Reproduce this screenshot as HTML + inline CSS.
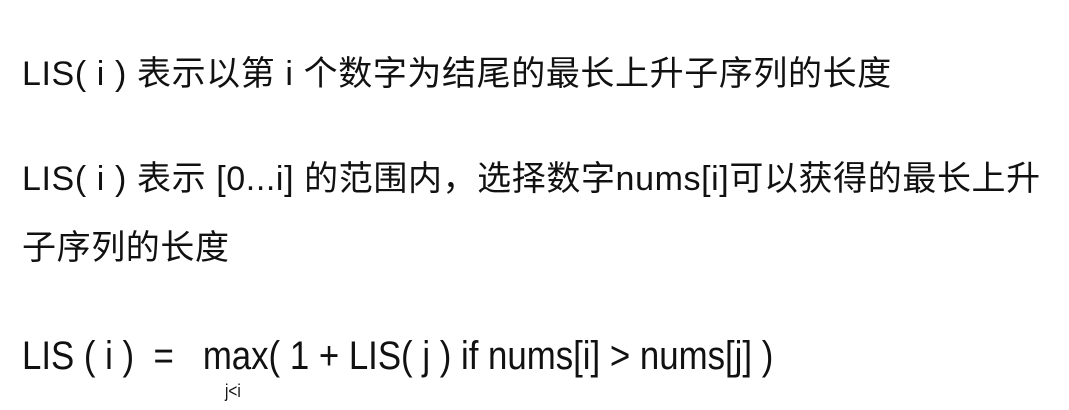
<!DOCTYPE html>
<html><head><meta charset="utf-8"><style>
html,body{margin:0;padding:0;background:#fff;width:1069px;height:410px;overflow:hidden}
.t{position:absolute;left:22px;font-family:"Liberation Sans","Noto Sans CJK SC",sans-serif;font-size:34px;color:#111;white-space:nowrap;letter-spacing:0.6px;line-height:1}
.f{position:absolute;left:22px;top:336px;font-family:"Liberation Sans",sans-serif;font-size:40px;color:#111;white-space:nowrap;transform:scaleX(0.87);transform-origin:0 0;line-height:1}
.s{position:absolute;left:225px;top:381px;font-family:"Liberation Sans",sans-serif;font-size:18px;color:#111;transform:scaleX(0.85);transform-origin:0 0}
</style></head><body>
<div class="t" style="top:57px">LIS( i ) 表示以第 i 个数字为结尾的最长上升子序列的长度</div>
<div class="t" style="top:162px">LIS( i ) 表示 [0...i] 的范围内，选择数字nums[i]可以获得的最长上升</div>
<div class="t" style="top:231px">子序列的长度</div>
<div class="f">LIS ( i )&nbsp; = &nbsp; max( 1 + LIS( j ) if nums[i] &gt; nums[j] )</div>
<div class="s">j&lt;i</div>
</body></html>
